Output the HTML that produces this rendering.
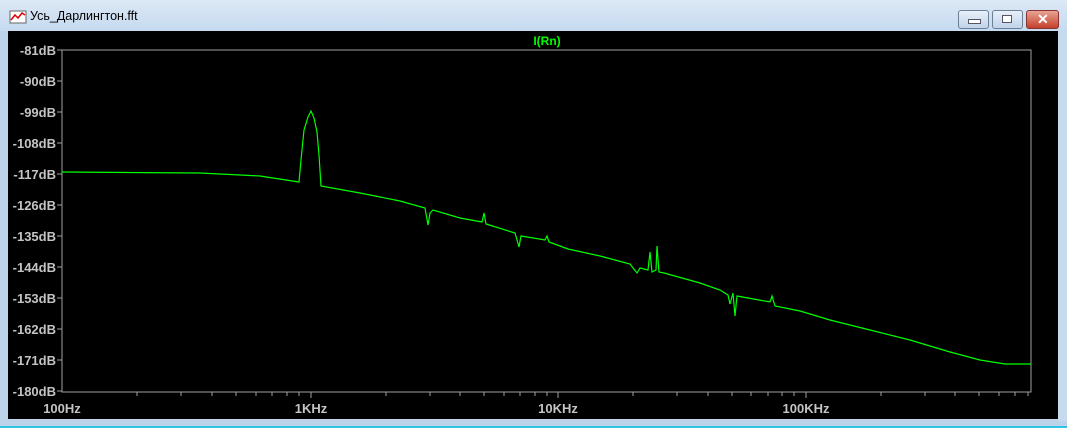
<!DOCTYPE html><html><head><style>
body{margin:0;width:1067px;height:428px;overflow:hidden;background:#bcd3ea;font-family:"Liberation Sans",sans-serif}
.title{position:absolute;left:0;top:0;width:1067px;height:31px;background:linear-gradient(#dce8f5,#c6daf0)}
.t{position:absolute;left:30px;top:9px;font-size:12.5px;color:#000}
.btn{position:absolute;top:10px;height:17px;border:1px solid #6d7f95;border-radius:3px;background:linear-gradient(#e8f0f9,#c0d3e9)}
.side{position:absolute;left:1058px;top:31px;width:9px;height:390px;background:#c7dbef}
</style></head><body>
<div class="title"></div>
<svg style="position:absolute;left:9px;top:10px" width="18" height="14"><rect x="1" y="1" width="16" height="12" fill="#fff" stroke="#666"/><path d="M2 10 L6 5 L9 8 L13 3 L16 5" stroke="#d00" stroke-width="1.5" fill="none"/></svg>
<div class="t">Усь_Дарлингтон.fft</div>
<div class="btn" style="left:958px;width:29px"><div style="position:absolute;left:9px;top:8px;width:11px;height:3px;background:#fff;border:1px solid #556"></div></div>
<div class="btn" style="left:992px;width:29px"><div style="position:absolute;left:9px;top:4px;width:8px;height:6px;border:1px solid #556;background:#fff"></div></div>
<div class="btn" style="left:1026px;width:31px;background:linear-gradient(#e8a393,#c4402c);border-color:#833">
<div style="position:absolute;left:10px;top:0px;color:#fff;font-weight:bold;font-size:14px">✕</div></div>
<svg style="position:absolute;left:8px;top:31px" width="1050" height="388">
<rect width="1050" height="388" fill="#000"/>
<g transform="translate(-8,-31)" font-size="13" font-weight="bold" fill="#c4c4c4" font-family="Liberation Sans,sans-serif">
<rect x="62" y="50" width="969" height="342" fill="none" stroke="#a0a0a0"/>
<text x="547" y="45" fill="#00ff00" text-anchor="middle" font-size="12">I(Rn)</text>
<g text-anchor="end">
<text x="56" y="55">-81dB</text><text x="56" y="86">-90dB</text><text x="56" y="117">-99dB</text><text x="56" y="148">-108dB</text><text x="56" y="179">-117dB</text><text x="56" y="210">-126dB</text><text x="56" y="241">-135dB</text><text x="56" y="272">-144dB</text><text x="56" y="303">-153dB</text><text x="56" y="334">-162dB</text><text x="56" y="365">-171dB</text><text x="56" y="396">-180dB</text>
</g>
<path stroke="#a0a0a0" d="M57 50h5M57 81h5M57 112h5M57 143h5M57 174h5M57 205h5M57 236h5M57 267h5M57 298h5M57 329h5M57 360h5M57 391h5
M137 392v4M181 392v4M212 392v4M236 392v4M256 392v4M272 392v4M287 392v4M299 392v4M311 392v6
M386 392v4M430 392v4M460 392v4M484 392v4M504 392v4M520 392v4M535 392v4M547 392v4M558 392v6
M633 392v4M677 392v4M708 392v4M732 392v4M751 392v4M768 392v4M782 392v4M794 392v4M806 392v6
M881 392v4M925 392v4M955 392v4M979 392v4M999 392v4M1015 392v4M1028 392v4"/>
<g text-anchor="middle"><text x="62" y="413">100Hz</text><text x="311" y="413">1KHz</text><text x="558" y="413">10KHz</text><text x="806" y="413">100KHz</text></g>
<path fill="none" stroke="#00ff00" stroke-width="1.2" d="M62 172 L200 173 L260 176 L299 182 L301 160 L304 130 L308 117 L311 111 L314 118 L317 132 L319 155 L321 186 L360 193 L400 201 L425 208 L428 225 L430 213 L433 210 L460 218 L482 222 L484 213 L486 224 L515 233 L519 247 L521 236 L545 240 L547 236 L549 242 L568 249 L600 256 L630 264 L637 273 L640 268 L648 270 L650 252 L652 272 L656 270 L657 246 L659 272 L664 273 L700 283 L720 290 L728 295 L730 304 L733 293 L735 316 L737 296 L770 302 L772 296 L775 306 L800 311 L830 320 L870 330 L910 340 L950 352 L980 360 L1005 364 L1031 364"/>
</g></svg>
<div class="side"></div>
<div style="position:absolute;left:0;top:426px;width:1067px;height:2px;background:#33c3e6"></div>
</body></html>
